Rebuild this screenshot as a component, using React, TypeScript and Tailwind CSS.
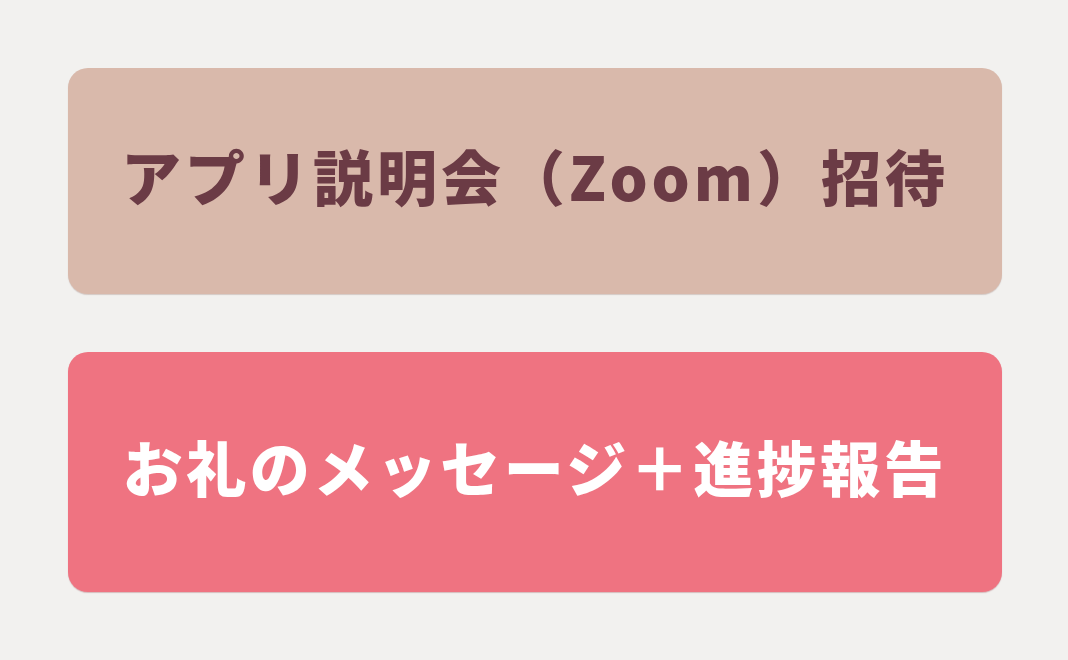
import React from 'react';

const font = { fontFamily: '"Noto Sans CJK JP", "Noto Sans", sans-serif' };

const App: React.FC = () => {
  return (
    <div className="min-h-screen w-full bg-[#f2f1ef] px-[68px] pt-[68px]" style={font}>
      <div className="flex w-[934px] flex-col gap-[58px]">
        <button className="flex h-[226px] items-center justify-center rounded-[20px] bg-[#d9b9ab] pb-[12px] shadow-[0_1px_1px_rgba(120,80,70,0.25)]">
          <span className="text-[60px] font-black leading-none tracking-[4px] text-[#6b3b45]">アプリ説明会（Zoom）招待</span>
        </button>
        <button className="flex h-[240px] items-center justify-center rounded-[20px] bg-[#ef7381] pb-[12px] shadow-[0_1px_1px_rgba(150,60,70,0.3)]">
          <span className="text-[60px] font-black leading-none tracking-[3.5px] text-white">お礼のメッセージ＋進捗報告</span>
        </button>
      </div>
    </div>
  );
};

export default App;
